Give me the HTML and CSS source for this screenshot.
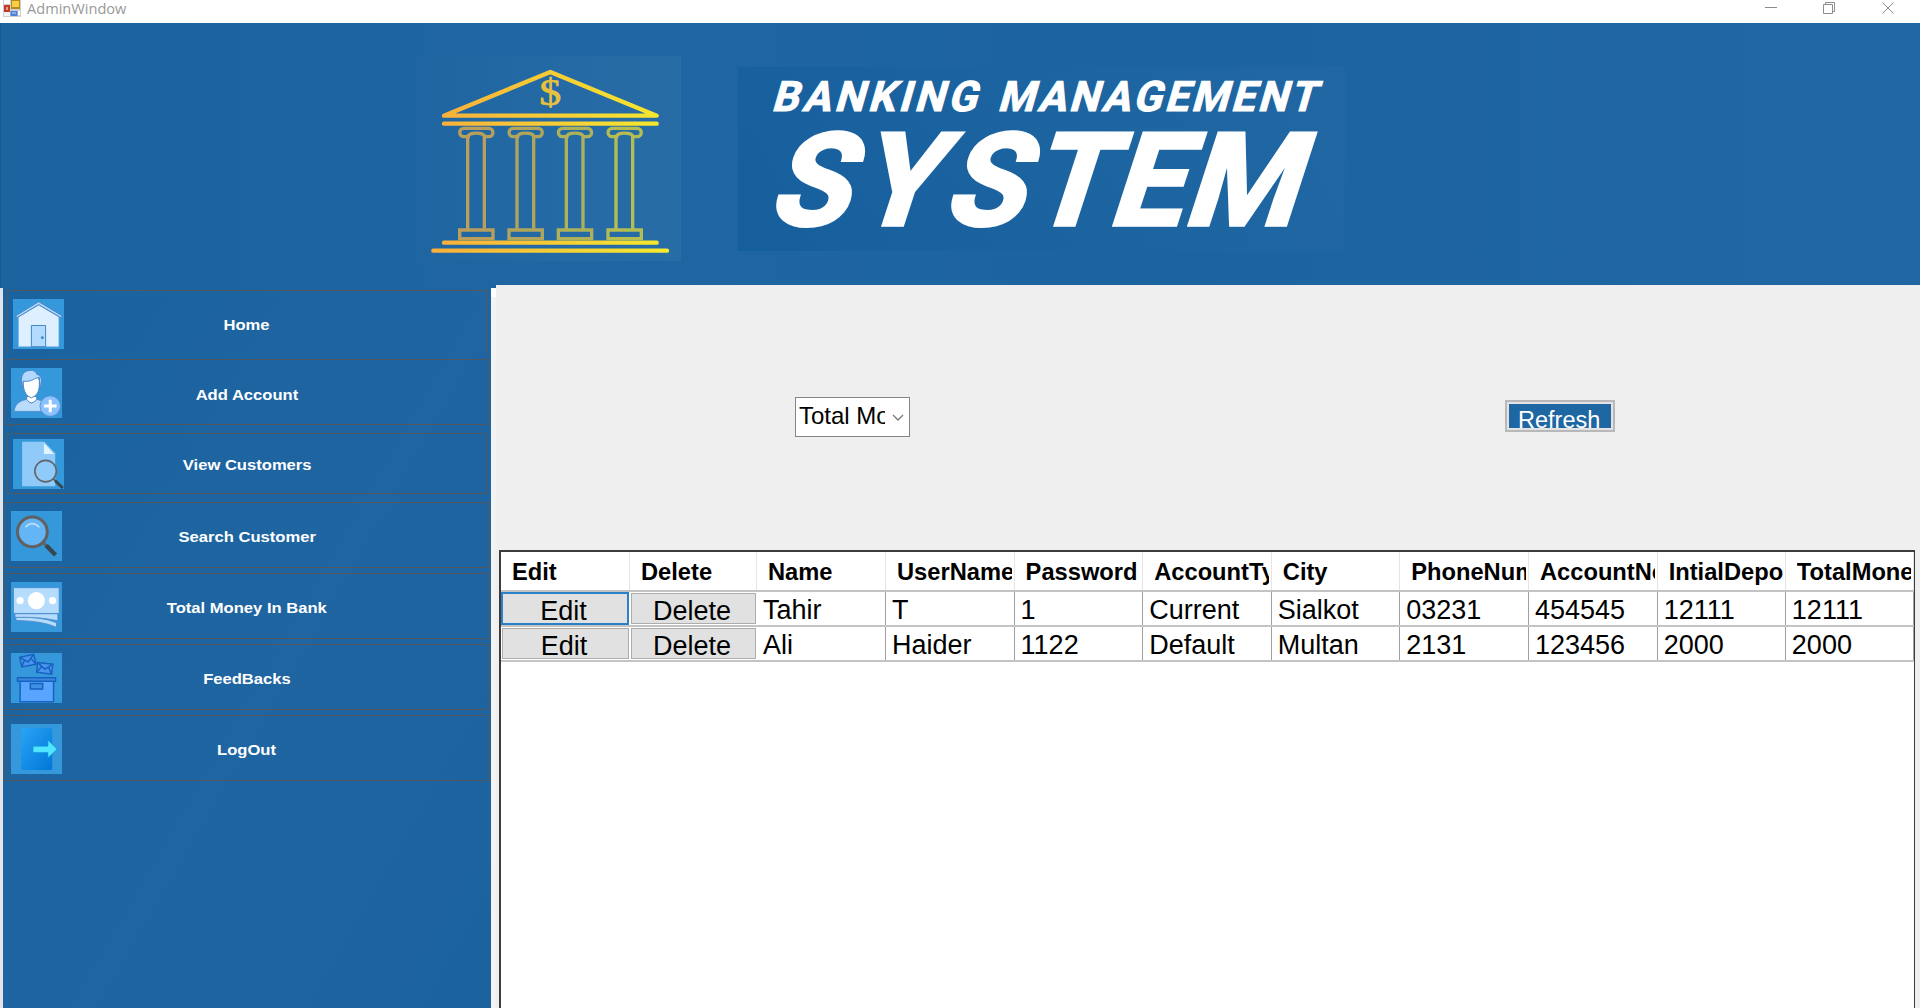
FILE: index.html
```html
<!DOCTYPE html>
<html lang="en">
<head>
<meta charset="utf-8">
<title>AdminWindow</title>
<link rel="stylesheet" href="styles.css">
</head>
<body>
<div class="titlebar">
  <svg class="app-icon" width="18" height="17" viewBox="0 0 18 17">
    <rect width="18" height="17" fill="#cfcfcf"/><rect x="1" y="0" width="6" height="4" fill="#fff"/><rect x="1" y="12" width="6" height="4" fill="#f4f4f4"/><rect x="15" y="11" width="2" height="4" fill="#fff"/>
    <rect x="1" y="5" width="6" height="7" fill="#c13a2c"/><rect x="3" y="7" width="2" height="3" fill="#e99a88"/>
    <rect x="8" y="0" width="9" height="9" fill="#b58a17"/><rect x="9" y="1" width="7" height="6" fill="#f7cf45"/>
    <rect x="7.500" y="11" width="7" height="5" fill="#4d80d8"/><rect x="9" y="12" width="4" height="2" fill="#86adf0"/>
  </svg>
  <span class="title">AdminWindow</span>
  <svg class="controls" width="130" height="16" viewBox="0 0 130 16" fill="none" stroke="#8c8c8c">
    <path d="M0 7.500H12M58.500 4.500h9v9h-9zM60.500 4.500v-2h9v9h-2M117.500 2.500l11 11M128.500 2.500l-11 11"/>
  </svg>
</div>
<header class="banner">
  <svg class="logo" width="273" height="205" viewBox="25 48 819 615">
    <defs>
      <linearGradient id="gold" gradientUnits="userSpaceOnUse" x1="95" y1="0" x2="808" y2="0"><stop offset="0" stop-color="#f9ae3b"/><stop offset="1" stop-color="#f5ea2e"/></linearGradient>
      <linearGradient id="panel"><stop offset="0" stop-color="#fff" stop-opacity="0"/><stop offset="1" stop-color="#fff" stop-opacity=".045"/></linearGradient>
      <g id="column"><path d="M-26 284V568M24 284V568M-50 570H50V596H-50ZM-37 265H37C54 265 54 290 37 290H24C24 276 -24 276 -24 290H-37C-54 290 -54 265 -37 265Z"/></g>
    </defs>
    <rect x="25" y="48" width="819" height="615" fill="url(#panel)"/>
    <g fill="none" stroke="url(#gold)" stroke-width="13" stroke-linecap="round" stroke-linejoin="round">
      <path d="M133 227L452 96L771 227ZM133 251H771.010M133 608H771.010M101 632H802L802 632.010"/>
    </g>
    <g fill="none" stroke-width="10" opacity=".78">
      <use href="#column" x="230" stroke="#e6ae49"/><use href="#column" x="378" stroke="#d9b64a"/><use href="#column" x="526" stroke="#d3c546"/><use href="#column" x="675" stroke="#dbd53c"/>
    </g>
    <text x="452" y="195" class="dollar" text-anchor="middle" textLength="66" lengthAdjust="spacingAndGlyphs">$</text>
  </svg>
  <svg class="wordmark" width="607" height="184" viewBox="738 67 607 184">
    <g class="wordmark-small" transform="translate(0 111) skewX(-16)">
      <text x="771" y="0" textLength="205">BANKING</text><text x="997" y="0" textLength="318">MANAGEMENT</text>
    </g>
    <g class="wordmark-big" transform="translate(0 225) skewX(-18)">
      <text x="766 853 941 1025 1106 1181" y="0">SYSTEM</text>
    </g>
  </svg>
</header>
<div class="workspace">
  <nav class="sidebar">
    <a class="item inset open">
      <svg class="icon" viewBox="0 0 151 151"><path d="M15 54L76 18 137 54V144H15Z" fill="#def0ff" stroke="#79b4e8" stroke-width="2"/><path d="M76 8L146 50V58L76 17 8 58V50Z" fill="#afd5fa" stroke="#4786c6" stroke-width="3"/><path d="M54 144V80H97V144Z" fill="#b3dbff" stroke="#4286c4" stroke-width="3"/><circle cx="87" cy="117" r="4.500" fill="#4a88bf"/></svg>
      <span>Home</span></a>
    <a class="item second">
      <svg class="icon" viewBox="0 0 151 151"><path d="M8 131C10 106 29 98 46 95L60 106 76 95C93 98 112 106 112 131Z" fill="#b9dcfc" stroke="#4b8aca" stroke-width="2.500"/><path d="M46 86V95Q60 116 76 95V86Z" fill="#fff" stroke="#4b8aca" stroke-width="3"/><path d="M35 40C35 73 46 85 60 90 75 84 86 73 84 39L80 25 35 36Z" fill="#fff" stroke="#4b8aca" stroke-width="3"/><path d="M33 63C25 25 32 8 59 7 71 8 75 14 76 19 91 22 94 38 88 62L84 29C67 29 65 43 35 40Z" fill="#b3d8ff" stroke="#4b8aca" stroke-width="3"/><circle cx="117" cy="115" r="31" fill="#8bc2fd" stroke="#4b8aca" stroke-width="2.500"/><path d="M117 96V134M98 115H136" stroke="#fff" stroke-width="9"/></svg>
      <span>Add Account</span></a>
    <a class="item inset third">
      <svg class="icon" viewBox="0 0 151 151"><path d="M26 8H93L126 43V143H26Z" fill="#90caf9"/><path d="M92 12V45H122Z" fill="#e1f5fe"/><circle cx="97" cy="97" r="32.500" fill="#90caf9" stroke="#626669" stroke-width="5"/><path d="M120 120L127 127" stroke="#555" stroke-width="5"/><path d="M126 126L149 148" stroke="#37474f" stroke-width="9"/></svg>
      <span>View Customers</span></a>
    <a class="item fourth">
      <svg class="icon" viewBox="0 0 151 151"><path d="M95 95L110 110" stroke="#616161" stroke-width="8"/><path d="M105 104L133 133" stroke="#37474f" stroke-width="13"/><circle cx="63" cy="63" r="45" fill="#64b5f6" stroke="#616161" stroke-width="9"/><path d="M42 49Q63 28 84 49" fill="none" stroke="#bbdefb" stroke-width="5"/></svg>
      <span>Search Customer</span></a>
    <a class="item">
      <svg class="icon" viewBox="0 0 151 151"><path d="M13 107Q88 103 136 123V137Q98 118 14 116Z" fill="#b5dbfd" stroke="#4b8aca" stroke-width="2.500"/><path d="M10 96H140V117Q79 104 11 107Z" fill="#b5dbfd" stroke="#4b8aca" stroke-width="2.500"/><path d="M6 17H144V95H6Z" fill="#b5dbfd" stroke="#4b8aca" stroke-width="2.500"/><g fill="#fff"><circle cx="75" cy="56" r="26"/><circle cx="26" cy="56" r="11"/><circle cx="124" cy="56" r="11"/></g></svg>
      <span>Total Money In Bank</span></a>
    <a class="item">
      <svg class="icon" viewBox="0 0 151 151"><g fill="#4895ed" stroke="#1662c1" stroke-width="4.500"><path d="M25 13L67 4 74 34 31 42Z"/><path d="M25 13L50 27 67 4M31 42L39 22M74 34L59 17" fill="none"/><path d="M79 29L125 34 121 64 76 58Z"/><path d="M79 29L101 49 125 34M76 58L91 41M121 64L112 43" fill="none"/><path d="M26 84H127V147H26Z" fill="#59a4ff"/><path d="M18 75H133V85H18Z" fill="#3a87dc"/><path d="M57 92H94V109H57Z" fill="#3f91e3"/></g></svg>
      <span>FeedBacks</span></a>
    <a class="item">
      <svg class="icon" viewBox="0 0 151 151"><defs><linearGradient id="door" x2="1" y2="1"><stop stop-color="#29a4f6"/><stop offset="1" stop-color="#0077d8"/></linearGradient></defs><rect x="29" y="11" width="94" height="128" rx="4" fill="url(#door)"/><path d="M65 67H110V49L138 76 110 102V86H65Z" fill="#50e6ff" stroke="#1396dc" stroke-width="2"/></svg>
      <span>LogOut</span></a>
  </nav>
  <main class="content">
    <div class="toolbar">
      <div class="combo"><span>Total Money</span><svg width="12" height="8" viewBox="0 0 12 8"><path d="M1 1L6 6 11 1" fill="none" stroke="#777" stroke-width="1.300"/></svg></div>
      <div class="refresh"><span>Refresh</span></div>
    </div>
    <div class="grid-view">
      <div class="row head"><span><i>Edit</i></span><span><i>Delete</i></span><span><i>Name</i></span><span><i>UserName</i></span><span><i>Password</i></span><span><i>AccountType</i></span><span><i>City</i></span><span><i>PhoneNumber</i></span><span><i>AccountNo</i></span><span><i>IntialDeposit</i></span><span><i>TotalMoney</i></span></div>
      <div class="row"><b class="btn focus">Edit</b><b class="btn">Delete</b><span>Tahir</span><span>T</span><span>1</span><span>Current</span><span>Sialkot</span><span>03231</span><span>454545</span><span>12111</span><span>12111</span></div>
      <div class="row"><b class="btn">Edit</b><b class="btn">Delete</b><span>Ali</span><span>Haider</span><span>1122</span><span>Default</span><span>Multan</span><span>2131</span><span>123456</span><span>2000</span><span>2000</span></div>
    </div>
  </main>
</div>
</body>
</html>
```
FILE: styles.css
```css
* { box-sizing: border-box; }
body { margin: 0; width: 1920px; height: 1008px; overflow: hidden; display: flex; flex-direction: column; background: #f0f0f0; font-family: "Liberation Sans", Arial, sans-serif; color: #000; }

.titlebar { height: 23px; flex: none; display: flex; align-items: flex-start; background: #fff; padding-left: 3px; }
.title { margin-left: 6px; font: 14.6px/17px "Open Sans", sans-serif; color: #999; }
.controls { margin-left: auto; margin-right: 25px; }

.banner { height: 265px; flex: none; padding: 33px 0 0 407px; display: flex; align-items: flex-start; gap: 57px; background: linear-gradient(90deg, #1b649f, #1f66a2 30%, #1c64a0 60%, #2067a4); border-left: 1px solid #195b92; }
.dollar { font: 112px "Liberation Serif", serif; fill: #e6c13f; stroke: #e6c13f; stroke-width: 2px; }
.wordmark { margin-top: 11px; background: linear-gradient(60deg, #165f9d, #1d65a1 60%, #2067a3); }
.wordmark text { fill: #fff; stroke: #fff; font-family: Roboto, sans-serif; font-weight: 700; }
.wordmark-small { font-size: 42px; stroke-width: 1px; }
.wordmark-big { font-size: 129px; stroke-width: 3.5px; }

.workspace { flex: 1; display: flex; min-height: 0; }
.sidebar { width: 491px; flex: none; border-left: 3px solid #e2e6ea; background: linear-gradient(120deg, #1a639f, #1f65a2 55%, #1b639f); padding: 3px 2px 0; display: flex; flex-direction: column; gap: 5px; }
.item { position: relative; height: 66px; flex: none; border: 1.500px solid #53585f; display: flex; align-items: center; justify-content: center; color: #fff; font-size: 15.5px; font-weight: 700; padding-top: 3px; }
.item.inset { margin: 0 2px; }
.item.open { height: 64px; border-bottom: 0; margin-top: -1px; padding-top: 5px; }
.item.second { padding-top: 5px; }
.item.third { height: 61px; margin-top: 3px; }
.item.fourth { margin-top: 3px; }
.item span { transform: scaleX(1.07); }
.icon { position: absolute; left: 5px; top: 8px; width: 51px; height: 50px; background: #3498db; }
.inset .icon { top: 5px; }
.open .icon { top: 8px; }

.content { flex: 1; margin: -3px 0 0; border-left: 5px solid #f3f3f3; background: #efefef; display: flex; flex-direction: column; padding: 1px 5px 0 3px; min-width: 0; background-clip: padding-box; border-image: linear-gradient(#1c64a0 3px, #fff 3px, #fff 12px, #f3f3f3 12px) 0 0 0 5; }
.toolbar { height: 264px; flex: none; display: flex; align-items: flex-start; }
.combo { width: 115px; height: 40px; margin: 111px 0 0 296px; background: #fff; border: 1px solid #858585; display: flex; align-items: center; font-size: 24px; padding: 0 5px 2px 3px; justify-content: space-between; }
.combo span { width: 86px; overflow: hidden; white-space: nowrap; }
.combo svg { flex: none; margin-top: 3px; }
.refresh { width: 110px; height: 32px; margin: 114px 0 0 595px; border: 2px solid #b8b8b8; background: #e3e3e3; padding: 2px; font-size: 23.5px; }
.refresh span { display: block; height: 24px; overflow: hidden; background: #1f67a3; color: #fff; line-height: 32px; padding-left: 9px; }

.grid-view { flex: 1; background: #fff; border: solid #3c3c3c; border-width: 2px 1px 0 2px; }
.row { display: grid; grid-template-columns: 129px 127px 129px 128.6px 128.6px 128.6px 128.4px 128.8px 128.7px 128.2px 1fr; grid-template-rows: 100%; height: 35px; font-size: 27px; border-bottom: 2px solid #c3c3c3; }
.row > span { overflow: hidden; white-space: nowrap; line-height: 37px; padding-left: 6px; border-right: 1px solid #a0a0a0; }
.row.head { height: 40px; font-size: 23.7px; font-weight: 700; }
.row.head > span { line-height: 40px; padding: 0 2px 0 11px; border-color: #e5e5e5; }
.row i { display: block; overflow: hidden; font-style: normal; }
.btn { font-weight: 400; margin: 1px; border: 1px solid #adadad; background: #e1e1e1; text-align: center; line-height: 34px; padding-right: 3px; overflow: hidden; }
.btn.focus { margin: 0 1px 0 0; border: 2px solid #2a81c8; }
```
